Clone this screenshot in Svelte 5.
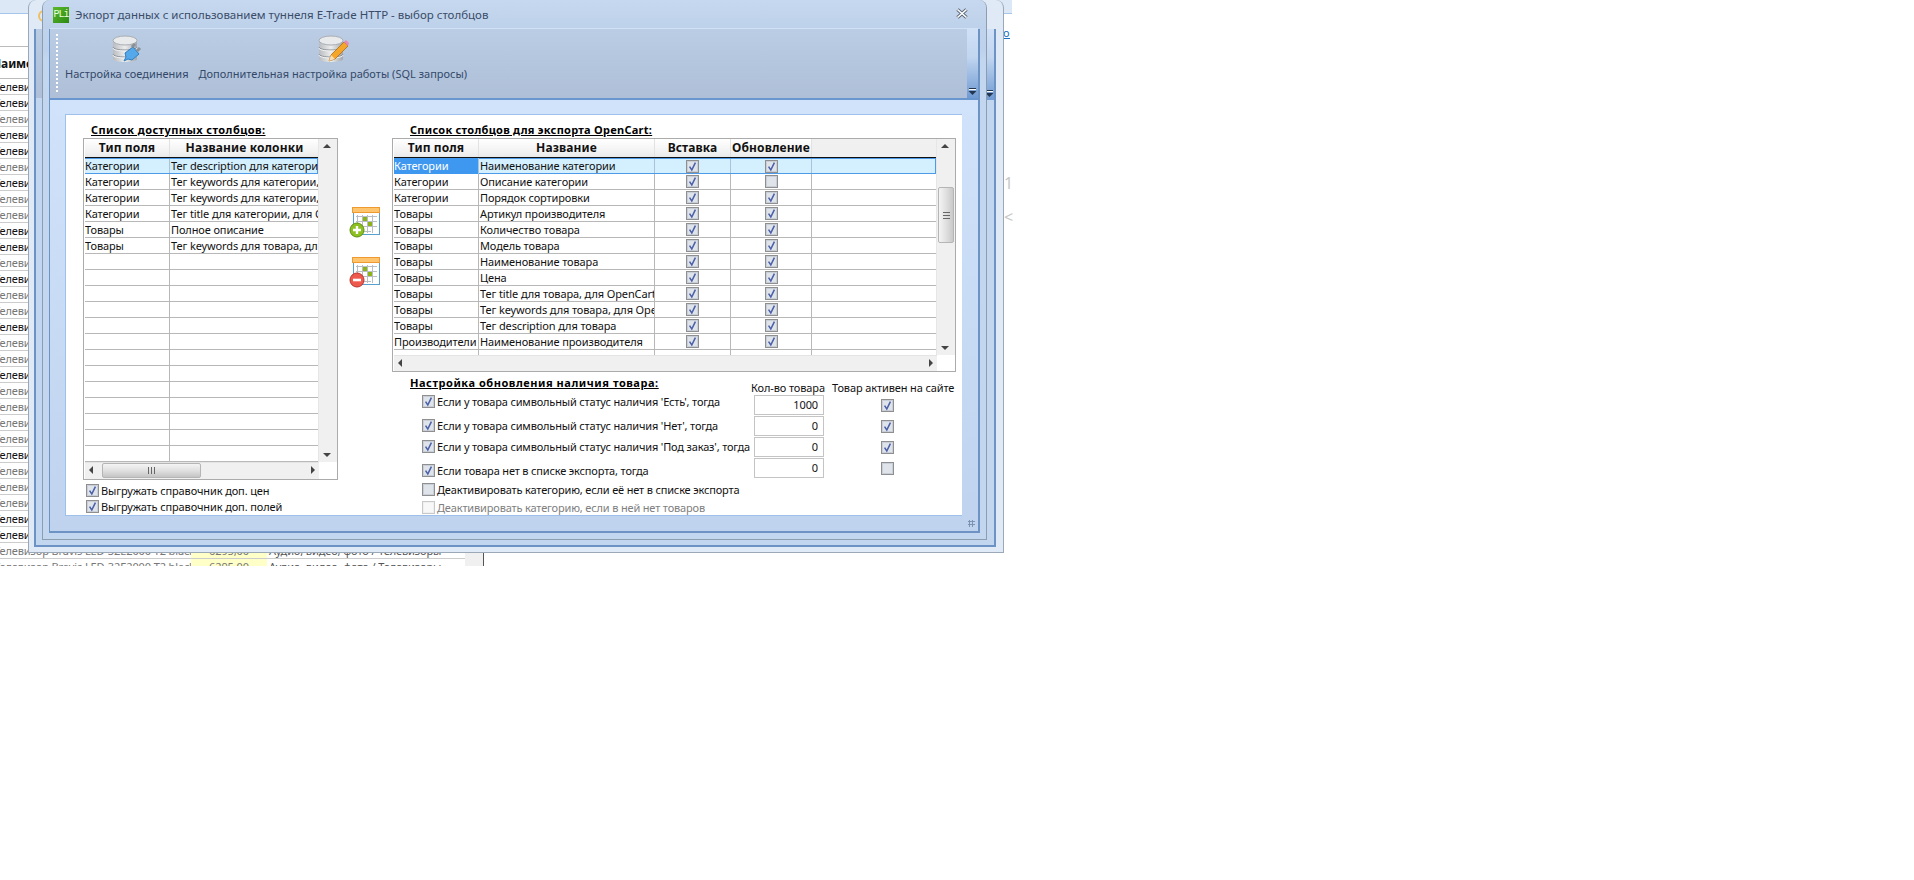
<script>
	const pageTone = [0,0,1,0,0,1,0,1,1,0,0,1,0,1,1,0,1,1,0,1,1,1,1,0,1,1,1,0,0,1,1];
	const pageRows = pageTone.map((gray, i) => ({ gray, i }));

	const leftRows = [
		['Категории', 'Тег description для категории, для OpenCart'],
		['Категории', 'Тег keywords для категории, для OpenCart'],
		['Категории', 'Тег keywords для категории, для OpenCart'],
		['Категории', 'Тег title для категории, для OpenCart'],
		['Товары', 'Полное описание'],
		['Товары', 'Тег keywords для товара, для OpenCart'],
		...Array(13).fill(['', ''])
	];

	const rightRows = [
		['Категории', 'Наименование категории', true, true],
		['Категории', 'Описание категории', true, false],
		['Категории', 'Порядок сортировки', true, true],
		['Товары', 'Артикул производителя', true, true],
		['Товары', 'Количество товара', true, true],
		['Товары', 'Модель товара', true, true],
		['Товары', 'Наименование товара', true, true],
		['Товары', 'Цена', true, true],
		['Товары', 'Тег title для товара, для OpenCart', true, true],
		['Товары', 'Тег keywords для товара, для OpenCart', true, true],
		['Товары', 'Тег description для товара', true, true],
		['Производители', 'Наименование производителя', true, true]
	];

	const stockLabels = [
		["Если у товара символьный статус наличия 'Есть', тогда", true],
		["Если у товара символьный статус наличия 'Нет', тогда", true],
		["Если у товара символьный статус наличия 'Под заказ', тогда", true],
		['Если товара нет в списке экспорта, тогда', true],
		['Деактивировать категорию, если её нет в списке экспорта', false],
		['Деактивировать категорию, если в ней нет товаров', false]
	];

	const stockValues = [
		['1000', true],
		['0', true],
		['0', true],
		['0', false]
	];
</script>

{#snippet check(on, off = false)}
	<svg class="check" class:off width="13" height="13" viewBox="0 0 13 13">
		<rect x="0.5" y="0.5" width="12" height="12" fill="#fff" stroke={off ? '#c8c8c8' : '#8f8f8f'} />
		<rect x="1.5" y="1.5" width="10" height="10" fill={off ? '#f8f8f8' : '#dfe3ea'} stroke={off ? '#f0f0f0' : '#c9cfd8'} />
		{#if on}
			<path d="M3.6 6.6 L5.8 10 L9.4 2.6" fill="none" stroke="#4a5fa8" stroke-width="1.5" />
		{/if}
	</svg>
{/snippet}

{#snippet dbBase()}
	<path d="M2 7 V25 C2 29 26 29 26 25 V7 Z" fill="url(#dbGrad)" />
	<ellipse cx="14" cy="6.5" rx="12" ry="4.5" fill="#e8eaec" stroke="#a9adb2" />
	<path d="M2 13 C2 17 26 17 26 13" fill="none" stroke="#8d9197" />
	<path d="M2 14 C2 18 26 18 26 14" fill="none" stroke="#f2f3f4" />
	<path d="M2 20 C2 24 26 24 26 20" fill="none" stroke="#8d9197" />
	<path d="M2 21 C2 25 26 25 26 21" fill="none" stroke="#f2f3f4" />
{/snippet}

{#snippet calendar(kind)}
	<svg width="32" height="32" viewBox="0 0 32 32">
		<rect x="4.5" y="1.5" width="26" height="26" fill="#fff" stroke="#5aa0cf" />
		<rect x="3.5" y="0.5" width="27" height="5" fill="#ffc46e" stroke="#ee9a30" />
		<path d="M7 9.5 H28 M7 14.5 H28 M7 19.5 H28 M7 24.5 H22 M8.5 8 V26 M13.5 8 V26 M18.5 8 V26 M23.5 8 V26" stroke="#b9bec4" fill="none" />
		<rect x="14" y="10" width="4" height="4" fill="#8db414" />
		<rect x="19" y="15" width="4" height="4" fill="#8db414" />
		{#if kind === 'add'}
			<circle cx="8" cy="23" r="7" fill="#8cc020" stroke="#5f8f14" />
			<path d="M4 23 H12 M8 19 V27" stroke="#fff" stroke-width="2.4" />
		{:else}
			<circle cx="8" cy="23" r="7" fill="#ee5a4e" stroke="#b9352c" />
			<path d="M4 23 H12" stroke="#fff" stroke-width="2.6" />
		{/if}
	</svg>
{/snippet}

{#snippet more()}
	<div class="more">
		<svg width="9" height="7" viewBox="0 0 9 7">
			<path d="M1 0.5 H8" stroke="#24364f" />
			<path d="M1 1.5 H8" stroke="#fff" />
			<path d="M0.5 3 H8.5 L4.5 7 Z" fill="#24364f" />
		</svg>
	</div>
{/snippet}

{#snippet vbar(thumb)}
	<div class="vbar">
		<i class="arrow up"></i>
		{#if thumb}
			<div class="vthumb"><b></b></div>
		{/if}
		<i class="arrow down"></i>
	</div>
{/snippet}

<div class="desk">
	<div class="strip"></div>
	<div class="page">
		<div class="page-head">Наименование</div>
		<div class="page-rows">
			{#each pageRows as row}
				<div class="page-row" class:gray={row.gray}>
					<span class="p-name">Телевизор Bravis LED-32E2000 T2 black</span>
					<span class="p-price">6295,00</span>
					<span class="p-cat">Аудио, видео, фото / Телевизоры</span>
				</div>
			{/each}
		</div>
	</div>
	<a class="frag-link" href="#top">ои</a>
	<span class="frag frag-one">1</span>
	<span class="frag frag-two">&lt;</span>

	<div class="win back">
		<div class="back-title"><i class="back-logo"></i></div>
		<div class="back-inner">
			<div class="back-bar">{@render more()}</div>
		</div>
	</div>

	<div class="win front">
		<header class="title">
			<span class="logo">PLi</span>
			<span class="title-text">Экпорт данных с использованием туннеля E-Trade HTTP - выбор столбцов</span>
			<svg class="close" width="12" height="11" viewBox="0 0 12 11">
				<path d="M1.5 1.5 L10.5 9.5 M10.5 1.5 L1.5 9.5" stroke="#5a6678" stroke-width="3.4" />
				<path d="M1.5 1.5 L10.5 9.5 M10.5 1.5 L1.5 9.5" stroke="#fff" stroke-width="1.6" />
			</svg>
		</header>

		<div class="inner">
			<nav class="toolbar">
				<i class="grip"></i>
				<div class="tools">
					<button class="tool">
						<svg width="32" height="32" viewBox="0 0 32 32">
							<defs>
								<linearGradient id="dbGrad" x1="0" x2="1" y1="0" y2="0">
									<stop offset="0" stop-color="#b9bcc0" />
									<stop offset="0.5" stop-color="#eceded" />
									<stop offset="1" stop-color="#a2a6ab" />
								</linearGradient>
							</defs>
							{@render dbBase()}
							<path d="M13 27 L15 23 L14 19 L22 13 L28 20 L21 26 L17 25 Z" fill="#55a8ea" stroke="#2f7cc0" />
							<path d="M21 13 L24 10 M26 17 L29 14" stroke="#8a9098" stroke-width="3" />
						</svg>
						<span>Настройка соединения</span>
					</button>
					<button class="tool">
						<svg width="32" height="32" viewBox="0 0 32 32">
							{@render dbBase()}
							<path d="M12 27 L14 21 L27 8 L31 12 L18 25 Z" fill="#f4a62a" stroke="#b06a10" stroke-width="0.8" />
							<path d="M12 27 L14 21 L18 25 Z" fill="#f6dfb8" />
							<path d="M27 8 L29 6 L32 9 L31 12 Z" fill="#e88ab0" />
						</svg>
						<span>Дополнительная настройка работы (SQL запросы)</span>
					</button>
				</div>
				{@render more()}
			</nav>

			<div class="client">
				<section class="panel">
					<div class="col-left">
						<h3 class="cap cap-left">Список доступных столбцов:</h3>
						<div class="grid-box left-box">
							<div class="grid-main">
								<div class="grid-area">
									<div class="head lrow">
										<span>Тип поля</span>
										<span>Название колонки</span>
									</div>
									{#each leftRows as row, i}
										<div class="row lrow" class:current={i === 0}>
											<span>{row[0]}</span>
											<span class="name">{row[1]}</span>
										</div>
									{/each}
								</div>
								{@render vbar(false)}
							</div>
							<div class="hbar">
								<i class="arrow left"></i>
								<div class="hthumb"><b></b></div>
								<i class="arrow right"></i>
							</div>
						</div>
						<label class="opt first">{@render check(true)} Выгружать справочник доп. цен</label>
						<label class="opt">{@render check(true)} Выгружать справочник доп. полей</label>
					</div>

					<div class="col-mid">
						{@render calendar('add')}
						{@render calendar('remove')}
					</div>

					<div class="col-right">
						<h3 class="cap cap-right">Список столбцов для экспорта OpenCart:</h3>
						<div class="grid-box right-box">
							<div class="grid-main">
								<div class="grid-area">
									<div class="head rrow">
										<span>Тип поля</span>
										<span>Название</span>
										<span>Вставка</span>
										<span>Обновление</span>
										<span class="blank"></span>
									</div>
									{#each rightRows as row, i}
										<div class="row rrow" class:current={i === 0}>
											<span class:picked={i === 0}>{row[0]}</span>
											<span class="name">{row[1]}</span>
											<span class="mid">{@render check(row[2])}</span>
											<span class="mid">{@render check(row[3])}</span>
											<span></span>
										</div>
									{/each}
									<div class="row rrow stub"><span></span><span></span><span></span><span></span><span></span></div>
								</div>
								{@render vbar(true)}
							</div>
							<div class="hbar">
								<i class="arrow left"></i>
								<i class="arrow right"></i>
							</div>
						</div>

						<div class="stock">
							<div class="stock-labels">
								<h3 class="cap stock-cap">Настройка обновления наличия товара:</h3>
								{#each stockLabels as item, i}
									<label class="stock-opt" class:dim={i === 5}>{@render check(item[1], i === 5)} {item[0]}</label>
								{/each}
							</div>
							<div class="stock-values">
								<div class="stock-heads">
									<span>Кол-во товара</span>
									<span>Товар активен на сайте</span>
								</div>
								{#each stockValues as item}
									<div class="stock-row">
										<span class="num">{item[0]}</span>
										<span class="stock-check">{@render check(item[1])}</span>
									</div>
								{/each}
							</div>
						</div>
					</div>
				</section>
				<i class="size-grip"></i>
			</div>
		</div>
	</div>
</div>

<style>
	:global(body) {
		margin: 0;
		background: #fff;
	}
	.desk {
		position: relative;
		width: 1914px;
		height: 880px;
		overflow: hidden;
		font-family: 'Noto Sans', 'Liberation Sans', sans-serif;
		font-size: 11px;
		letter-spacing: -0.12px;
		color: #111;
	}
	.strip {
		width: 1012px;
		height: 13px;
		background: #dce8f6;
		border-bottom: 1px solid #a5c5ea;
	}
	.page {
		width: 483px;
		margin-top: 32px;
		border-right: 1px solid #555;
	}
	.page-head {
		height: 31px;
		line-height: 33px;
		margin-left: -8px;
		border-top: 1px solid #bbb;
		border-bottom: 1px solid #bbb;
		font-size: 12px;
		font-weight: 700;
	}
	.page-rows {
		height: 487px;
		overflow: hidden;
		background: linear-gradient(90deg, transparent 465px, #f0f0f0 465px);
	}
	.page-row {
		display: grid;
		grid-template-columns: 191px 76px 198px;
		height: 15px;
		line-height: 15px;
		border-bottom: 1px solid #ccc;
		width: 465px;
		white-space: nowrap;
		overflow: hidden;
	}
	.page-row.gray {
		color: #777;
	}
	.p-name {
		margin-left: -6px;
	}
	.p-price {
		background: #ffffc8;
		text-align: center;
	}
	.p-cat {
		padding-left: 2px;
		color: #555;
	}
	.frag-link {
		position: absolute;
		left: 1003px;
		top: 25px;
		width: 7px;
		overflow: hidden;
		color: #1a6fc0;
	}
	.frag {
		position: absolute;
		left: 1004px;
		color: #c8c8c8;
		font-size: 16px;
	}
	.frag-one {
		top: 172px;
	}
	.frag-two {
		top: 206px;
	}

	.win {
		position: absolute;
		top: 0;
		box-sizing: border-box;
		border: 1px solid #9aa8b8;
		border-top: 0;
		border-radius: 8px 8px 0 0;
	}
	.back {
		left: 28px;
		width: 976px;
		height: 553px;
		padding: 0 7px 5px 5px;
		background: #dfeaf6;
		display: flex;
		flex-direction: column;
	}
	.back-title {
		height: 29px;
		flex: none;
	}
	.back-logo {
		display: block;
		width: 12px;
		height: 12px;
		margin: 10px 0 0 4px;
		border: 2px solid #f0c060;
		border-radius: 50%;
		box-sizing: border-box;
	}
	.back-inner {
		flex: 1;
		background: linear-gradient(#b9cce4, #aebfd7) 0 0 / 100% 69px no-repeat, #c2d6f0;
		border: 2px solid #6c93c4;
		border-top: 0;
		display: flex;
		justify-content: flex-end;
	}
	.back-bar {
		width: 9px;
		height: 71px;
		display: flex;
	}

	.front {
		left: 42px;
		width: 945px;
		height: 540px;
		padding: 0 6px 6px 6px;
		background: linear-gradient(#c3d6ee, #bdd1ec 50px, #c2d6f0 60px);
		border-color: #8d9db0;
		display: flex;
		flex-direction: column;
	}
	.title {
		height: 29px;
		flex: none;
		display: flex;
		align-items: center;
		gap: 6px;
		background: linear-gradient(#c6d8ef, #bdd1ea);
		margin: 0 -6px;
		padding-left: 10px;
		border-radius: 8px 8px 0 0;
	}
	.logo {
		width: 16px;
		height: 16px;
		flex: none;
		background: linear-gradient(135deg, #5cb82a, #2c8a14);
		color: #eaffd8;
		font: 10px/16px 'Liberation Mono', monospace;
		text-align: center;
		letter-spacing: -1px;
	}
	.title-text {
		flex: 1;
		font-size: 11.5px;
		letter-spacing: 0;
		color: #3a4c68;
		white-space: nowrap;
	}
	.close {
		margin-right: 18px;
		margin-bottom: 2px;
	}
	.inner {
		flex: 1;
		display: flex;
		flex-direction: column;
		border: 2px solid #6c93c4;
		border-top: 0;
		border-left-width: 1px;
		min-height: 0;
	}
	.toolbar {
		height: 69px;
		flex: none;
		display: flex;
		background: linear-gradient(#bacde5, #aebfd7);
		border-top: 1px solid #d2e2f6;
		border-bottom: 2px solid #6a96cf;
		box-sizing: content-box;
		margin-top: -1px;
	}
	.grip {
		width: 2px;
		height: 60px;
		margin: 5px 0 0 6px;
		background: repeating-linear-gradient(#fff 0 2px, transparent 2px 4px);
		flex: none;
	}
	.tools {
		flex: 1;
		display: flex;
		gap: 10px;
		padding-left: 7px;
	}
	.tool {
		height: 54px;
		padding: 5px 0 0;
		display: flex;
		flex-direction: column;
		align-items: center;
		background: none;
		border: 0;
		font: inherit;
		letter-spacing: inherit;
		color: #33496a;
		white-space: nowrap;
	}
	.tool span {
		line-height: 14px;
		margin-top: 1px;
		letter-spacing: 0;
	}
	.more {
		width: 11px;
		flex: none;
		background: linear-gradient(#d0e1f7, #c2d6f0 40%, #6f9ad3);
		display: flex;
		align-items: flex-end;
		justify-content: center;
		padding-bottom: 3px;
		box-sizing: border-box;
	}
	.back-bar .more {
		width: 9px;
	}
	.client {
		flex: 1;
		padding: 14px 16px 15px 15px;
		background: linear-gradient(#d1e3fa, #bfd3ef);
		position: relative;
		display: flex;
		min-height: 0;
	}
	.panel {
		flex: 1;
		background: #fff;
		border: 1px solid #9dc0ec;
		border-right: 0;
		display: flex;
		padding: 7px 0 0 17px;
		overflow: hidden;
		min-height: 0;
	}
	.size-grip {
		position: absolute;
		right: 3px;
		bottom: 4px;
		width: 7px;
		height: 7px;
		background: radial-gradient(circle, #7c93b3 1px, transparent 1.2px) 0 0 / 3px 3px;
	}
	.cap {
		margin: 0;
		font-size: 11px;
		line-height: 16px;
		font-weight: 700;
		text-decoration: underline;
		color: #000;
		white-space: nowrap;
	}
	.cap-left {
		padding-left: 8px;
		letter-spacing: 0.42px;
	}
	.cap-right {
		padding-left: 18px;
		letter-spacing: 0.26px;
	}
	.col-left {
		width: 255px;
		flex: none;
	}
	.col-mid {
		width: 54px;
		flex: none;
		box-sizing: border-box;
		padding: 85px 0 0 11px;
		display: flex;
		flex-direction: column;
		gap: 18px;
	}
	.col-right {
		width: 571px;
		flex: none;
	}
	.grid-box {
		box-sizing: border-box;
		border: 1px solid #ababab;
		overflow: hidden;
	}
	.left-box {
		height: 342px;
	}
	.right-box {
		width: 564px;
		height: 234px;
	}
	.grid-main {
		display: flex;
	}
	.left-box .grid-main {
		height: 323px;
	}
	.right-box .grid-main {
		height: 216px;
	}
	.grid-area {
		flex: 1;
		overflow: hidden;
		padding-left: 1px;
	}
	.lrow {
		display: grid;
		grid-template-columns: 85px 150px;
	}
	.rrow {
		display: grid;
		grid-template-columns: 85px 176px 76px 81px 125px;
	}
	.head {
		height: 18px;
		background: linear-gradient(#fff, #f2f2f2 70%, #e9e9e9);
		border-bottom: 1px solid #111;
		box-sizing: content-box;
		font-size: 12px;
		font-weight: 700;
		letter-spacing: 0.12px;
		line-height: 17px;
		text-align: center;
		white-space: nowrap;
		overflow: hidden;
	}
	.head span {
		border-right: 1px solid #e2e2e2;
	}
	.head .blank {
		border: 0;
		background: #f0f0f0;
	}
	.row {
		height: 16px;
		line-height: 15px;
		box-sizing: border-box;
		border-bottom: 1px solid #b8b8b8;
		white-space: nowrap;
	}
	.row span {
		overflow: hidden;
		border-right: 1px solid #b8b8b8;
	}
	.row span:last-child {
		border-right: 0;
	}
	.row .name {
		padding-left: 1px;
	}
	.row.current {
		background: #d4f0ff;
		border-top: 1px solid #4d9be8;
		border-bottom: 1px solid #4d9be8;
		line-height: 13px;
	}
	.row.current span {
		border-right-color: #a8c4d8;
	}
	.lrow.current,
	.rrow.current {
		border-right: 1px solid #4d9be8;
	}
	.row .picked {
		background: #3f98f0;
		color: #fff;
		margin: -1px 0;
		line-height: 15px;
	}
	.row .mid {
		display: flex;
		align-items: center;
		justify-content: center;
	}
	.stub {
		height: 6px;
		border-bottom: 0;
		border-top: 0;
	}
	.check {
		display: block;
		flex: none;
	}
	.vbar {
		width: 18px;
		flex: none;
		background: #f0f0f0;
		border-left: 1px solid #e6e6e6;
		position: relative;
	}
	.vthumb {
		position: absolute;
		left: 1px;
		top: 48px;
		width: 14px;
		height: 54px;
		border: 1px solid #b5b5b5;
		border-radius: 2px;
		background: linear-gradient(90deg, #f4f4f4, #dedede 55%, #c8c8c8);
		display: flex;
		align-items: center;
		justify-content: center;
	}
	.vthumb b {
		width: 7px;
		height: 7px;
		background: repeating-linear-gradient(#666 0 1px, transparent 1px 3px);
	}
	.hbar {
		height: 16px;
		background: #f0f0f0;
		position: relative;
		margin-right: 18px;
		margin-left: 1px;
		border-top: 1px solid #e4e4e4;
	}
	.hthumb {
		position: absolute;
		left: 17px;
		top: 0;
		width: 97px;
		height: 13px;
		border: 1px solid #b5b5b5;
		border-radius: 2px;
		background: linear-gradient(#f4f4f4, #dedede 55%, #c4c4c4);
		display: flex;
		align-items: center;
		justify-content: center;
	}
	.hthumb b {
		width: 7px;
		height: 7px;
		background: repeating-linear-gradient(90deg, #666 0 1px, transparent 1px 3px);
	}
	.arrow {
		position: absolute;
		width: 0;
		height: 0;
		border: 4px solid transparent;
	}
	.arrow.up {
		top: 5px;
		left: 4px;
		border-top: 0;
		border-bottom-color: #444;
	}
	.arrow.down {
		bottom: 5px;
		left: 4px;
		border-bottom: 0;
		border-top-color: #444;
	}
	.arrow.left {
		top: 3px;
		left: 4px;
		border-left: 0;
		border-right-color: #444;
	}
	.arrow.right {
		top: 3px;
		right: 4px;
		border-right: 0;
		border-left-color: #444;
	}
	.opt {
		display: flex;
		align-items: center;
		gap: 2px;
		height: 16px;
		margin-left: 3px;
	}
	.opt.first {
		margin-top: 2px;
	}
	.stock {
		display: flex;
	}
	.stock-labels {
		width: 362px;
		flex: none;
		padding-top: 3px;
	}
	.stock-cap {
		margin-left: 18px;
		margin-bottom: 2px;
		width: 232px;
		letter-spacing: 0.54px;
	}
	.stock-opt {
		display: flex;
		align-items: center;
		gap: 2px;
		height: 16px;
		margin-left: 30px;
		white-space: nowrap;
		letter-spacing: -0.16px;
	}
	.stock-opt:nth-of-type(2) {
		margin-top: 8px;
	}
	.stock-opt:nth-of-type(3) {
		margin-top: 5px;
	}
	.stock-opt:nth-of-type(4) {
		margin-top: 8px;
	}
	.stock-opt:nth-of-type(5) {
		margin-top: 3px;
	}
	.stock-opt:nth-of-type(6) {
		margin-top: 2px;
	}
	.stock-opt.dim {
		color: #808080;
	}
	.stock-values {
		padding-top: 8px;
	}
	.stock-heads {
		display: flex;
		gap: 7px;
		height: 15px;
		line-height: 15px;
		white-space: nowrap;
		margin-left: -3px;
	}
	.stock-row {
		display: flex;
		height: 21px;
		align-items: flex-start;
	}
	.num {
		width: 70px;
		height: 20px;
		box-sizing: border-box;
		border: 1px solid #c4c4c4;
		text-align: right;
		padding: 2px 5px 0 0;
		line-height: 14px;
	}
	.stock-check {
		padding: 4px 0 0 57px;
	}
</style>
